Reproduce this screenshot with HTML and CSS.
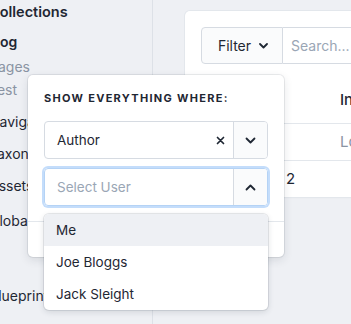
FILE: index.html
```html
<!DOCTYPE html>
<html lang="en">
<head>
    <meta charset="UTF-8">
    <meta name="viewport" content="width=device-width, initial-scale=1.0">
    <title>Entries</title>
    <link rel="stylesheet" href="styles.css">
</head>
<body>
    <nav class="sidebar">
        <ul class="nav-list">
            <li class="nav-heading">Collections</li>
            <li class="nav-section">Blog</li>
            <li class="nav-sub">Pages</li>
            <li class="nav-sub">Test</li>
            <li class="nav-item">Navigation</li>
            <li class="nav-item">Taxonomies</li>
            <li class="nav-item">Assets</li>
            <li class="nav-item nav-globals">Globals</li>
            <li class="nav-item nav-gap">Blueprints</li>
        </ul>
    </nav>

    <main class="main">
        <div class="card">
            <div class="toolbar">
                <button class="filter-btn">
                    Filter
                    <svg width="9" height="6" viewBox="0 0 9 6"><path d="M1 1l3.5 3.5L8 1" fill="none" stroke="currentColor" stroke-width="1.8" stroke-linecap="round" stroke-linejoin="round"/></svg>
                </button>
                <input class="search" type="text" placeholder="Search...">
            </div>
            <table class="entries">
                <thead>
                    <tr><th class="col-title"></th><th class="col-b"></th><th>Info</th></tr>
                </thead>
                <tbody>
                    <tr><td></td><td></td><td class="muted">Lorem</td></tr>
                    <tr><td></td><td>2</td><td></td></tr>
                </tbody>
            </table>
        </div>
    </main>

    <div class="popover">
        <h4 class="popover-title">Show everything where:</h4>
        <div class="select">
            <span class="select-value">Author</span>
            <span class="select-clear">
                <svg width="9" height="9" viewBox="0 0 9 9"><path d="M1.5 1.5l6 6M7.5 1.5l-6 6" stroke="currentColor" stroke-width="1.7" stroke-linecap="round"/></svg>
            </span>
            <span class="select-toggle">
                <svg width="11" height="7" viewBox="0 0 11 7"><path d="M1.5 1.5l4 4 4-4" fill="none" stroke="currentColor" stroke-width="1.8" stroke-linecap="round" stroke-linejoin="round"/></svg>
            </span>
        </div>
        <div class="select is-open">
            <span class="select-value placeholder">Select User</span>
            <span class="select-toggle">
                <svg width="11" height="7" viewBox="0 0 11 7"><path d="M1.5 5.5l4-4 4 4" fill="none" stroke="currentColor" stroke-width="1.8" stroke-linecap="round" stroke-linejoin="round"/></svg>
            </span>
        </div>
        <div class="popover-footer"></div>

        <ul class="dropdown">
            <li class="option active">Me</li>
            <li class="option">Joe Bloggs</li>
            <li class="option">Jack Sleight</li>
        </ul>
    </div>
</body>
</html>
```

FILE: styles.css
```css
body {
    margin: 0;
    height: 324px;
    display: flex;
    overflow: hidden;
    background-color: #eef0f4;
    font-family: Inter, "Noto Sans", sans-serif;
    font-size: 14px;
    color: #1f2733;
}

.sidebar {
    width: 152px;
    flex-shrink: 0;
    border-right: 1px solid #dde1e7;
    overflow: hidden;
}

.nav-list {
    list-style: none;
    margin: 0 0 0 -11px;
    padding: 3px 0 0;
}

.nav-list li {
    line-height: 18px;
    white-space: nowrap;
}

.nav-heading {
    font-weight: 600;
    font-size: 14.5px;
    margin-bottom: 12px;
}

.nav-section {
    font-weight: 600;
    margin-left: -2px;
    margin-bottom: 7px;
}

.nav-sub {
    color: #8a94a3;
    margin-bottom: 5px;
}

.nav-item {
    margin-top: 14px;
}

.nav-globals {
    margin-top: 17px;
}

.nav-gap {
    margin-top: 57px;
}

.main {
    flex: 1;
    padding: 11px 0 0 32px;
    overflow: hidden;
}

.card {
    background: #fff;
    border-radius: 5px 0 0 5px;
    box-shadow: 0 0 0 1px #e3e7ec, 0 1px 2px rgba(0, 0, 0, 0.04);
    padding: 16px 0 0 16px;
    height: 170px;
    width: 300px;
}

.toolbar {
    display: flex;
    height: 37px;
}

.filter-btn {
    width: 82px;
    height: 37px;
    flex-shrink: 0;
    display: flex;
    align-items: center;
    justify-content: center;
    gap: 8px;
    padding: 0 0 0 2px;
    background: #fafbfc;
    border: 1px solid #d6dbe2;
    border-radius: 4px 0 0 4px;
    font-family: inherit;
    font-size: 14px;
    color: #1f2733;
}

.search {
    flex: 1;
    min-width: 0;
    height: 37px;
    box-sizing: border-box;
    border: 1px solid #d6dbe2;
    border-left: none;
    padding: 0 8px;
    font-family: inherit;
    font-size: 14px;
}

.search::placeholder {
    color: #9aa6b5;
}

.entries {
    border-collapse: collapse;
    margin: 22px 0 0 -16px;
    width: 316px;
    font-size: 15px;
}

.entries th {
    text-align: left;
    font-weight: 500;
    height: 37px;
    padding: 0 1px 9px;
    box-sizing: border-box;
    border-bottom: 1px solid #e3e7ec;
}

.entries td {
    height: 37px;
    padding: 0 1px;
    box-sizing: border-box;
    border-bottom: 1px solid #e3e7ec;
}

.entries tbody tr:last-child td {
    border-bottom: none;
}

.col-title {
    width: 100px;
}

.col-b {
    width: 54px;
}

.muted {
    color: #8a94a3;
}

.popover {
    position: absolute;
    left: 28px;
    top: 75px;
    width: 256px;
    box-sizing: border-box;
    padding: 16px 16px 0;
    background: #fff;
    border-radius: 5px;
    box-shadow: 0 0 0 1px rgba(40, 50, 70, 0.09), 0 3px 10px rgba(30, 40, 60, 0.12);
}

.popover-title {
    margin: 0 0 16px;
    font-size: 11px;
    font-weight: 700;
    letter-spacing: 1.3px;
    text-transform: uppercase;
    line-height: 14px;
    color: #1f2733;
}

.select {
    display: flex;
    height: 38px;
    box-sizing: border-box;
    border: 1px solid #d6dbe2;
    border-radius: 4px;
    margin-bottom: 8px;
    align-items: stretch;
}

.select.is-open {
    border-color: #b5d3f5;
    box-shadow: 0 0 0 2px #c4ddfb;
    margin-top: 9px;
    margin-bottom: 15px;
}

.select-value {
    flex: 1;
    display: flex;
    align-items: center;
    padding-left: 12px;
    font-size: 13.5px;
}

.placeholder {
    color: #9aa6b5;
}

.select-clear {
    display: flex;
    align-items: center;
    padding: 0 8px 0 9px;
    color: #1f2733;
}

.select-toggle {
    width: 33px;
    display: flex;
    align-items: center;
    justify-content: center;
    background: #fafbfc;
    border-left: 1px solid #d6dbe2;
    border-radius: 0 3px 3px 0;
    color: #1f2733;
}

.popover-footer {
    height: 35px;
    border-top: 1px solid #e3e7ec;
    margin: 0 -16px;
}

.dropdown {
    position: absolute;
    left: 16px;
    top: 139px;
    width: 224px;
    margin: 0;
    padding: 0;
    list-style: none;
    background: #fff;
    border-radius: 5px;
    overflow: hidden;
    box-shadow: 0 0 0 1px rgba(40, 50, 70, 0.1), 0 2px 6px rgba(30, 40, 60, 0.14);
}

.option {
    height: 32px;
    line-height: 32px;
    padding-left: 12px;
    font-size: 13.5px;
}

.option.active {
    background: #eef0f4;
}
```
